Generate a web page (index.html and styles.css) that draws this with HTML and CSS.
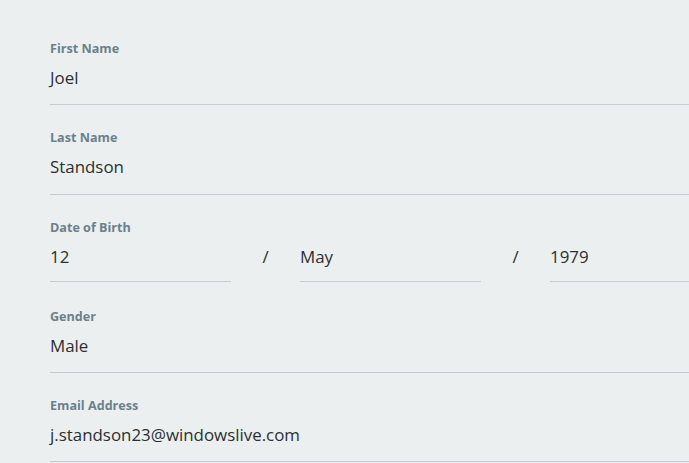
FILE: index.html
```html
<!DOCTYPE html>
<html>
<head>
<meta charset="utf-8">
<link rel="stylesheet" href="styles.css">
</head>
<body>
<form class="form">
  <div class="field">
    <label class="label">First Name</label>
    <div class="value">Joel</div>
  </div>
  <div class="field">
    <label class="label">Last Name</label>
    <div class="value">Standson</div>
  </div>
  <div class="field-group">
    <label class="label">Date of Birth</label>
    <div class="date-row">
      <div class="value date-part">12</div>
      <span class="sep">/</span>
      <div class="value date-part">May</div>
      <span class="sep">/</span>
      <div class="value date-part">1979</div>
    </div>
  </div>
  <div class="field">
    <label class="label">Gender</label>
    <div class="value">Male</div>
  </div>
  <div class="field">
    <label class="label">Email Address</label>
    <div class="value">j.standson23@windowslive.com</div>
  </div>
</form>
</body>
</html>
```
FILE: styles.css
```css
html, body {
  margin: 0;
  padding: 0;
  background: #eceff0;
  overflow: hidden;
  height: 100%;
}
body {
  font-family: "Open Sans", "Noto Sans", sans-serif;
}
.form {
  width: 681px;
  margin-left: 50px;
  padding-top: 16px;
}
.field {
  height: 88.25px;
  border-bottom: 1px solid #c6cbce;
  box-sizing: content-box;
}
.field-group {
  height: 89.25px;
}
.label {
  display: block;
  padding-top: 25px;
  font-size: 12.6px;
  font-weight: 700;
  color: #6a818a;
  line-height: 16px;
}
.value {
  margin-top: 10px;
  font-size: 16.9px;
  line-height: 22px;
  color: #2b2f31;
}
.date-row {
  display: flex;
  align-items: flex-start;
}
.date-part {
  width: 181px;
  height: 35px;
  border-bottom: 1px solid #c6cbce;
  margin-top: 10px;
}
.sep {
  width: 69px;
  text-align: center;
  margin-top: 10px;
  font-size: 16.9px;
  line-height: 22px;
  color: #2b2f31;
}
```
